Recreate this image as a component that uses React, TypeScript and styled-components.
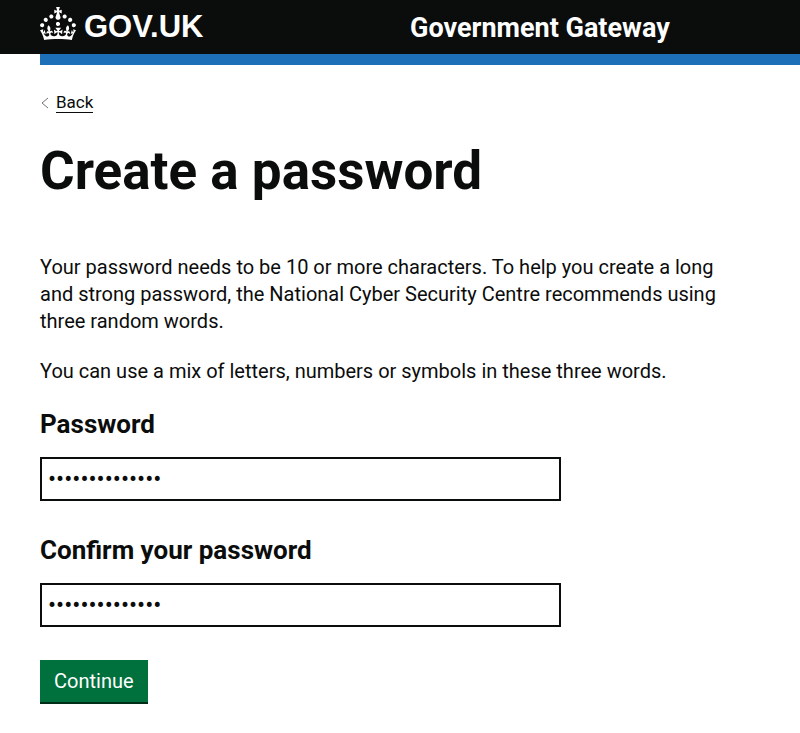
import React from "react";
import styled, { createGlobalStyle } from "styled-components";

const GlobalStyle = createGlobalStyle`
  *, *::before, *::after { box-sizing: border-box; }
  body {
    margin: 0;
    background: #ffffff;
    color: #0b0c0c;
    font-family: Roboto, "Liberation Sans", Arial, sans-serif;
  }
`;

const Header = styled.header`
  display: grid;
  grid-template-columns: 370px 1fr;
  align-items: center;
  height: 54px;
  padding-left: 40px;
  background: #0b0c0c;
`;

const LogoLink = styled.a`
  display: inline-flex;
  align-items: center;
  justify-self: start;
  gap: 8px;
  height: 54px;
  padding-bottom: 7px;
  color: #ffffff;
  font-family: "Liberation Sans", Arial, sans-serif;
  font-size: 31px;
  font-weight: 700;
  line-height: 32px;
  text-decoration: none;
`;

const LogoText = styled.span`
  padding-top: 6px;
`;

const Crown = styled.svg`
  width: 36px;
  height: 33px;
  fill: currentColor;
`;

const ServiceLink = styled.a`
  justify-self: start;
  padding-top: 2px;
  color: #ffffff;
  font-size: 27px;
  font-weight: 700;
  line-height: 32px;
  text-decoration: none;
  white-space: nowrap;
`;

const Container = styled.div`
  margin-left: 40px;
  border-top: 11px solid #1d70b8;
`;

const BackLink = styled.a`
  display: inline-flex;
  align-items: center;
  gap: 7px;
  margin-top: 28px;
  color: #0b0c0c;
  font-size: 17px;
  line-height: 22px;
  text-decoration: none;
`;

const BackText = styled.span`
  border-bottom: 1px solid #0b0c0c;
  line-height: 19px;
`;

const Chevron = styled.svg`
  width: 9px;
  height: 12px;
  fill: none;
  stroke: #6f7777;
`;

const Main = styled.main`
  max-width: 700px;
  padding: 30px 0;
`;

const Title = styled.h1`
  margin: 0 0 55px;
  font-size: 53px;
  font-weight: 700;
  line-height: 56px;
`;

const Paragraph = styled.p`
  margin: 0 0 23px;
  font-size: 20px;
  line-height: 27px;
`;

const Field = styled.div`
  margin-bottom: 33px;
`;

const Label = styled.label`
  display: block;
  margin-bottom: 17px;
  font-size: 26px;
  font-weight: 700;
  line-height: 32px;
`;

const PasswordInput = styled.input`
  display: block;
  width: 100%;
  max-width: 521px;
  height: 44px;
  padding: 6px;
  border: 2px solid #0b0c0c;
  border-radius: 0;
  background: #ffffff;
  color: #0b0c0c;
  font: 24px/27px Roboto, "Liberation Sans", sans-serif;
`;

const SubmitButton = styled.button`
  padding: 8px 14px 7px;
  border: 0;
  border-radius: 0;
  background: #00703c;
  box-shadow: 0 2px 0 #002d18;
  color: #ffffff;
  font: 20px/27px Roboto, "Liberation Sans", sans-serif;
`;

type PasswordFieldProps = { id: string; label: string };

function PasswordField({ id, label }: PasswordFieldProps) {
  return (
    <Field>
      <Label htmlFor={id}>{label}</Label>
      <PasswordInput id={id} type="password" defaultValue="threerandomwor" />
    </Field>
  );
}

export default function App() {
  return (
    <>
      <GlobalStyle />
      <Header>
        <LogoLink href="#home">
          <Crown viewBox="0 0 32 30" preserveAspectRatio="none" aria-hidden="true">
            <path d="M22.6 10.4c-1 .4-2-.1-2.4-1-.4-.9.1-2 1-2.4.9-.4 2 .1 2.4 1s-.1 2-1 2.4m-5.9 6.7c-.9.4-2-.1-2.4-1-.4-.9.1-2 1-2.4.9-.4 2 .1 2.4 1s-.1 2-1 2.4m10.8-3.7c-1 .4-2-.1-2.4-1-.4-.9.1-2 1-2.4.9-.4 2 .1 2.4 1s0 2-1 2.4m3.3 4.8c-1 .4-2-.1-2.4-1-.4-.9.1-2 1-2.4.9-.4 2 .1 2.4 1s-.1 2-1 2.4M17 4.7l2.3 1.2V2.5l-2.3.7-.2-.2.9-3h-3.4l.9 3-.2.2c-.1.1-2.3-.7-2.3-.7v3.4L15 4.7c.1.1.1.2.2.2l-1.3 4c-.1.2-.1.4-.1.6 0 1.1.8 2 1.9 2.2h.7c1-.2 1.9-1.1 1.9-2.1 0-.2 0-.4-.1-.6l-1.3-4c-.1-.2 0-.2.1-.3m-7.6 5.7c.9.4 2-.1 2.4-1 .4-.9-.1-2-1-2.4-.9-.4-2 .1-2.4 1s0 2 1 2.4m-5 3c.9.4 2-.1 2.4-1 .4-.9-.1-2-1-2.4-.9-.4-2 .1-2.4 1s.1 2 1 2.4m-3.2 4.8c.9.4 2-.1 2.4-1 .4-.9-.1-2-1-2.4-.9-.4-2 .1-2.4 1s0 2 1 2.4m14.8 11c4.4 0 8.6.3 12.3.8 1.1-4.5 2.4-7 3.7-8.8l-2.5-.9c.2 1.3.3 1.9 0 2.7-.4-.4-.8-1.1-1.1-2.3l-1.2 4c.7-.5 1.3-.8 2-.9-1.1 2.5-2.6 3.1-3.5 3-1.1-.2-1.7-1.2-1.5-2.1.3-1.2 1.5-1.5 2.1-.1 1.1-2.3-.8-3-2-2.3 1.9-1.9 2.1-3.5.6-5.6-2.1 1.6-2.1 3.2-1.2 5.5-1.2-1.4-3.2-.6-2.5 1.6.9-1.4 2.1-.5 1.9.8-.2 1.1-1.7 2.1-3.5 1.9-2.7-.2-2.9-2.1-2.9-3.6.7-.1 1.9.5 2.9 1.9l.4-4.3c-1.1 1.1-2.1 1.4-3.2 1.4.4-1.2 2.1-3 2.1-3h-5.4s1.7 1.9 2.1 3c-1.1 0-2.1-.2-3.2-1.4l.4 4.3c1-1.4 2.2-2 2.9-1.9-.1 1.5-.2 3.4-2.9 3.6-1.9.2-3.4-.8-3.5-1.9-.2-1.3 1-2.2 1.9-.8.7-2.3-1.2-3-2.5-1.6.9-2.2.9-3.9-1.2-5.5-1.5 2-1.3 3.7.6 5.6-1.2-.7-3.1 0-2 2.3.6-1.4 1.8-1.1 2.1.1.2.9-.3 1.9-1.5 2.1-.9.2-2.4-.5-3.5-3 .6 0 1.2.3 2 .9l-1.2-4c-.3 1.1-.7 1.9-1.1 2.3-.3-.8-.2-1.4 0-2.7L0 21.200c1.300 1.800 2.600 4.300 3.700 8.800 3.700-.5 7.900-.8 12.300-.8" />
          </Crown>
          <LogoText>GOV.UK</LogoText>
        </LogoLink>
        <ServiceLink href="#service">Government Gateway</ServiceLink>
      </Header>
      <Container>
        <BackLink href="#back">
          <Chevron viewBox="0 0 9 12" aria-hidden="true">
            <path d="M8 1 2 6l6 5" />
          </Chevron>
          <BackText>Back</BackText>
        </BackLink>
        <Main>
          <Title>Create a password</Title>
          <Paragraph>
            Your password needs to be 10 or more characters. To help you create a long and strong
            password, the National Cyber Security Centre recommends using three random words.
          </Paragraph>
          <Paragraph>
            You can use a mix of letters, numbers or symbols in these three words.
          </Paragraph>
          <form onSubmit={(event) => event.preventDefault()}>
            <PasswordField id="password" label="Password" />
            <PasswordField id="confirm-password" label="Confirm your password" />
            <SubmitButton type="submit">Continue</SubmitButton>
          </form>
        </Main>
      </Container>
    </>
  );
}
